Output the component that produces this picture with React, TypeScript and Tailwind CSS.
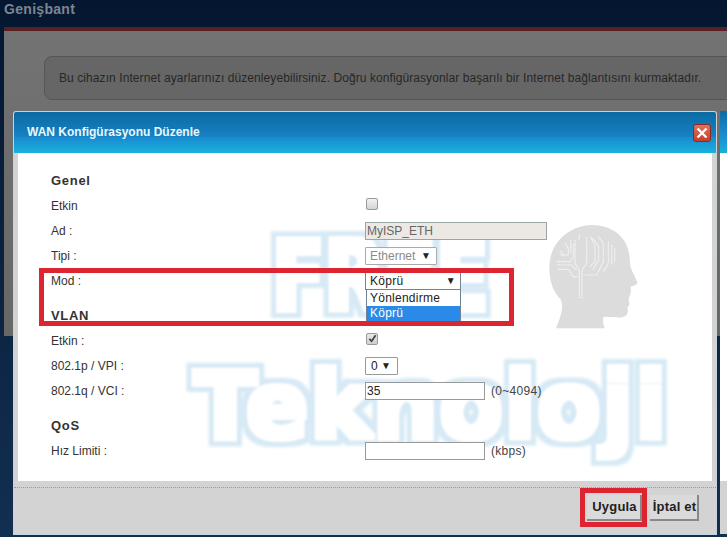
import type { ReactNode } from "react";

const sans = "font-['Liberation_Sans',Arial,sans-serif]";

function Row({ label, children }: { label: string; children?: ReactNode }) {
  return (
    <div className="flex h-[25px] items-center">
      <div className="w-[314px] text-[12px] text-[#333]">{label}</div>
      {children}
    </div>
  );
}

function Heading({ children, className }: { children: ReactNode; className?: string }) {
  return (
    <div className={`flex h-[25px] items-center text-[13px] font-bold tracking-[0.7px] text-[#333] ${className ?? ""}`}>
      {children}
    </div>
  );
}

function Arrow() {
  return <span className="text-[10px] leading-none text-[#222]">▼</span>;
}

function HeadLogo() {
  return (
    <svg viewBox="0 0 330 360" className="absolute left-[522px] top-[67px] h-[120px] w-[110px]">
      <path
        fill="#dcdcdc"
        d="M48 325 C62 290 72 262 62 238 C38 215 22 170 30 120 C40 55 100 15 155 15 C215 15 262 50 268 105 C270 125 270 140 275 150 L292 187 C293 195 280 198 272 200 C272 215 274 222 268 228 L266 240 C270 250 268 258 262 262 C268 285 255 295 230 292 L190 290 C188 305 190 318 195 325 Z"
      />
      <g fill="none" stroke="#f4f4f4" strokeWidth="3.5" strokeDasharray="5 1.5">
        <path d="M118 235 V150 L105 130 V60" />
        <path d="M126 235 V150 L140 130 V50" />
        <path d="M50 125 H90 L100 110 V70" />
        <path d="M50 135 H95 L110 150" />
        <path d="M55 148 H85 L100 170 H112" />
        <path d="M75 70 L85 85 V105 H58" />
        <path d="M62 92 L72 110" />
        <path d="M92 60 V100" />
        <path d="M150 50 L165 75 V125 L150 140" />
        <path d="M175 50 L190 70 V125 L170 165 H135" />
        <path d="M158 55 L176 78 V120 L158 150" />
        <path d="M205 65 V130 L190 155" />
        <path d="M215 75 V135" />
        <path d="M224 85 V125" />
        <path d="M118 45 V60" />
      </g>
    </svg>
  );
}

export default function App() {
  return (
    <div className={`relative h-[537px] w-[727px] overflow-hidden bg-gradient-to-b from-[#051730] to-[#122f51] ${sans}`}>
      {/* Halo and fattening for the watermark letters */}
      <svg className="absolute h-0 w-0">
        <filter id="wm" x="-10%" y="-20%" width="120%" height="140%">
          <feMorphology in="SourceAlpha" operator="dilate" radius="2.5" result="inner" />
          <feGaussianBlur in="inner" stdDeviation="0.8" result="innerSoft" />
          <feFlood floodColor="#ffffff" />
          <feComposite in2="innerSoft" operator="in" result="fill" />
          <feMorphology in="SourceAlpha" operator="dilate" radius="8" result="outer" />
          <feGaussianBlur in="outer" stdDeviation="1.4" result="outerSoft" />
          <feFlood floodColor="#d6e9f5" />
          <feComposite in2="outerSoft" operator="in" result="halo" />
          <feMerge>
            <feMergeNode in="halo" />
            <feMergeNode in="fill" />
          </feMerge>
        </filter>
      </svg>

      {/* Page behind the dimming layer */}
      <div className="h-[27px] pl-1 text-[14px] font-bold leading-[18px] tracking-[0.3px] text-[#7c8590]">
        Genişbant
      </div>
      <div className="ml-1 h-[309px] overflow-hidden border-t-4 border-[#5a1f24] bg-gradient-to-b from-[#737373] to-[#676767] pt-[25px]">
        <div className="-mr-4 ml-10 flex h-[44px] items-center rounded-lg border border-[#555] bg-[#666] pl-[14px] text-[12px] tracking-[0.08px] text-[#262626]">
          Bu cihazın Internet ayarlarınızı düzenleyebilirsiniz. Doğru konfigürasyonlar başarılı bir Internet bağlantısını kurmaktadır.
        </div>
      </div>

      {/* Sliver of the dialog edge at the right */}
      <div className="absolute left-[720px] top-[111px] flex h-[423px] w-[7px] flex-col">
        <div className="h-[42px] bg-gradient-to-b from-[#0c6ca6] via-[#1a88cc] to-[#1ab0dc]" />
        <div className="h-[328px] bg-white" />
        <div className="flex-1 bg-[#d3d3d3]" />
      </div>

      {/* Dialog */}
      <div className="absolute left-[13px] top-[111px] flex h-[424px] w-[704px] flex-col overflow-hidden rounded-t-[3px] border border-dotted border-[#c4d4dc] bg-[#d3d3d3]">
        <div className="relative flex h-[41px] shrink-0 flex-col">
          <div className="h-[25px] bg-gradient-to-b from-[#0b6aa3] to-[#1782c4]" />
          <div className="flex-1 bg-gradient-to-b from-[#1a8ad0] to-[#1ab2dd]" />
          <div className="absolute inset-y-0 left-[13px] flex items-center pb-[2px] text-[12px] font-bold text-[#e6f8ff]">
            WAN Konfigürasyonu Düzenle
          </div>
          <div className="absolute left-[679px] top-[12px] flex h-[18px] w-[18px] items-center justify-center rounded-[3px] border border-[#8c2a20] bg-gradient-to-b from-[#e2715c] to-[#c63c28]">
            <svg viewBox="0 0 12 12" className="h-[12px] w-[12px]">
              <path d="M1.5 1.5 L10.5 10.5 M10.5 1.5 L1.5 10.5" stroke="#fff" strokeWidth="2.4" />
            </svg>
          </div>
        </div>

        <div className="relative mx-1 h-[328px] shrink-0 bg-white pl-[33px] pt-[15px]">
          {/* Watermark */}
          <div className="pointer-events-none absolute inset-0 select-none font-['DejaVu_Sans',sans-serif] font-bold text-[#000] [filter:url(#wm)]">
            <div className="absolute left-[254px] top-[64px] origin-left scale-x-[0.8] text-[96px] leading-[120px]">FREE</div>
            <div className="absolute left-[176px] top-[199px] text-[92px] leading-[110px] tracking-[1.5px]">Teknoloji</div>
          </div>
          <HeadLogo />

          <div className="relative">
            <Heading>Genel</Heading>
            <Row label="Etkin">
              <div className="mb-[4px] ml-px h-[12px] w-[12px] rounded-[2px] border border-[#9a9a9a] bg-gradient-to-b from-[#f2f2f2] to-[#d4d4d4]" />
            </Row>
            <Row label="Ad :">
              <div className="flex h-[18px] w-[182px] items-center border border-[#9aa5a8] bg-[#ece9e4] pl-[1px] text-[12px] text-[#666]">
                MyISP_ETH
              </div>
            </Row>
            <Row label="Tipi :">
              <div className="flex h-[18px] w-[72px] items-center justify-between rounded-[1px] border border-[#aaa] bg-white pl-[4px] pr-[5px] text-[12px] text-[#8a8a8a]">
                Ethernet
                <Arrow />
              </div>
            </Row>
            <Row label="Mod :">
              <div className="relative flex h-[18px] w-[96px] items-center justify-between border border-[#6f8296] bg-white pl-[4px] pr-[4px] text-[12px] tracking-[0.3px] text-[#222]">
                Köprü
                <Arrow />
                {/* Open list of the select */}
                <div className="absolute left-0 top-[17px] w-[95px] border-x border-b border-[#6f8296] bg-white text-[12px] tracking-[0.25px]">
                  <div className="flex h-[16px] items-center pl-[3px] text-[#222]">Yönlendirme</div>
                  <div className="flex h-[15px] items-center bg-[#2b8ae8] pl-[3px] text-white">Köprü</div>
                </div>
              </div>
            </Row>
            <Heading className="mt-[10px]">VLAN</Heading>
            <Row label="Etkin :">
              <div className="mb-[4px] ml-px flex h-[12px] w-[12px] items-center justify-center rounded-[2px] border border-[#9a9a9a] bg-gradient-to-b from-[#e8e8e8] to-[#d0d0d0]">
                <svg viewBox="0 0 10 10" className="h-[9px] w-[9px]">
                  <path d="M1.5 5.5 L4 8 L8.5 1.5" fill="none" stroke="#444" strokeWidth="2" />
                </svg>
              </div>
            </Row>
            <Row label="802.1p / VPI :">
              <div className="flex h-[18px] w-[33px] items-center justify-between rounded-[1px] border border-[#999] bg-white pl-[5px] pr-[6px] text-[12px] text-[#222]">
                0
                <Arrow />
              </div>
            </Row>
            <Row label="802.1q / VCI :">
              <div className="flex h-[18px] w-[120px] items-center border border-[#999] bg-white pl-[1px] text-[12px] text-[#222]">35</div>
              <span className="ml-[6px] text-[12px] tracking-[0.3px] text-[#444]">(0~4094)</span>
            </Row>
            <Heading className="mt-[10px]">QoS</Heading>
            <Row label="Hız Limiti :">
              <div className="h-[18px] w-[120px] border border-[#999] bg-white" />
              <span className="ml-[6px] text-[12px] tracking-[0.3px] text-[#444]">(kbps)</span>
            </Row>
          </div>
        </div>

        <div className="mt-[6px] flex flex-1 items-start justify-end gap-2 border-t border-dotted border-[#999] pr-[17px] pt-[7px]">
          <div className="flex h-[26px] w-[55px] items-center justify-center border-b-2 border-r-2 border-[#888] bg-[#dadada] pl-[2px] text-[13px] font-bold tracking-[0.2px] text-[#222]">
            Uygula
          </div>
          <div className="flex h-[26px] w-[49px] items-center justify-center border-b-2 border-r-2 border-[#888] bg-[#dadada] pl-[2px] text-[13px] font-bold tracking-[0.2px] text-[#222]">
            İptal et
          </div>
        </div>
      </div>

      {/* Red annotation boxes */}
      <div className="absolute left-[39px] top-[268px] h-[58px] w-[475px] border-[5px] border-[#dc2530]" />
      <div className="absolute left-[580px] top-[488px] h-[39px] w-[67px] border-[5px] border-[#dc2530]" />
    </div>
  );
}
